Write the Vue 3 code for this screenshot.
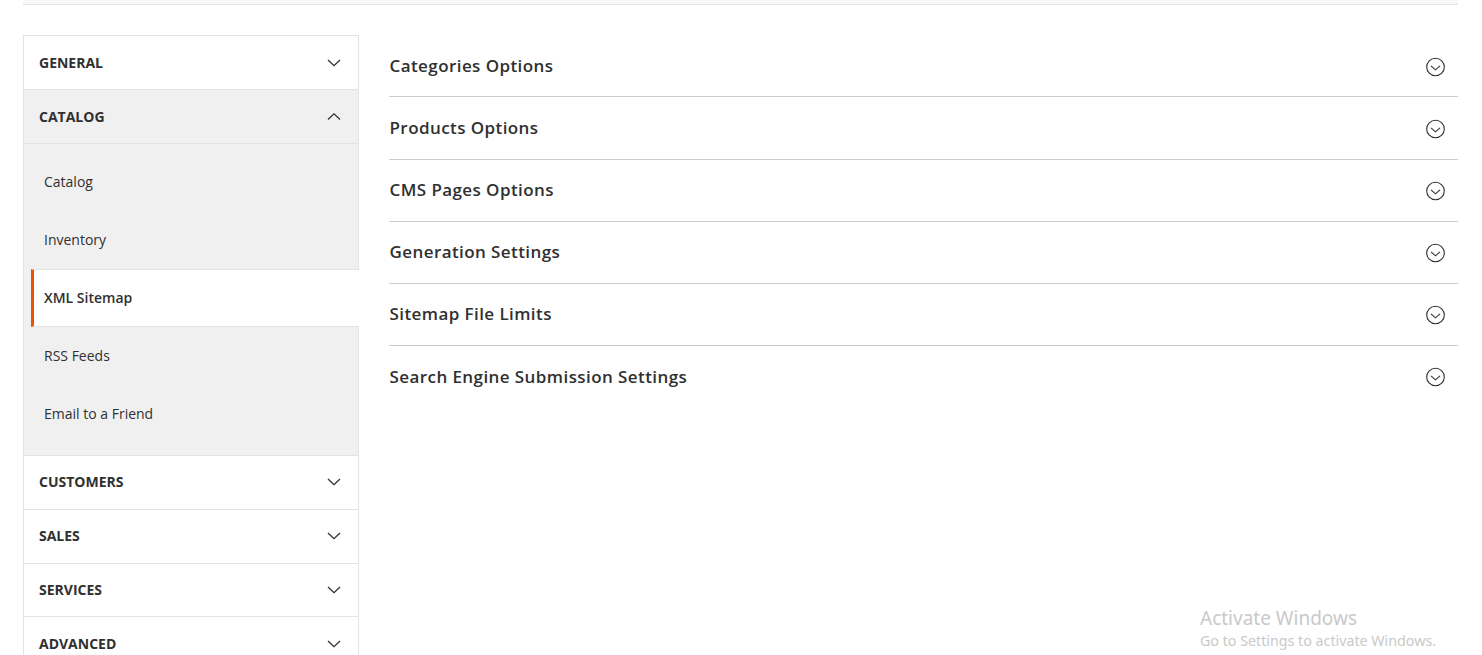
<script setup>
const before = [{ label: 'GENERAL', h: 54, nudge: false }]
const subs = ['Catalog', 'Inventory', 'XML Sitemap', 'RSS Feeds', 'Email to a Friend']
const after = [
  { label: 'CUSTOMERS', h: 54, nudge: true },
  { label: 'SALES', h: 54, nudge: true },
  { label: 'SERVICES', h: 53, nudge: true },
  { label: 'ADVANCED', h: 54, nudge: false }
]
const sections = [
  'Categories Options',
  'Products Options',
  'CMS Pages Options',
  'Generation Settings',
  'Sitemap File Limits',
  'Search Engine Submission Settings'
]
</script>

<template>
  <div class="page">
    <div class="topbar"></div>
    <div class="columns">
      <nav class="side">
        <div v-for="s in before" :key="s.label" class="head" :style="{ height: s.h + 'px' }">
          <span>{{ s.label }}</span>
          <svg class="chev" width="14" height="9" viewBox="0 0 14 9"><path d="M1 2 L7 7.7 L13 2" /></svg>
        </div>
        <div class="head open">
          <span>CATALOG</span>
          <svg class="chev" width="14" height="9" viewBox="0 0 14 9"><path d="M1 7.5 L7 1.8 L13 7.5" /></svg>
        </div>
        <div class="subs">
          <a v-for="s in subs" :key="s" class="sub" :class="{ active: s === 'XML Sitemap' }">{{ s }}</a>
        </div>
        <div v-for="s in after" :key="s.label" class="head" :class="{ nudge: s.nudge }" :style="{ height: s.h + 'px' }">
          <span>{{ s.label }}</span>
          <svg class="chev" width="14" height="9" viewBox="0 0 14 9"><path d="M1 2 L7 7.7 L13 2" /></svg>
        </div>
      </nav>
      <main class="main">
        <div v-for="(s, i) in sections" :key="s" class="section" :class="{ last: i === sections.length - 1 }">
          <span>{{ s }}</span>
          <svg class="circ" width="20" height="20" viewBox="0 0 20 20">
            <circle cx="10.5" cy="10" r="8.8" />
            <path d="M6 8.8 L10.5 12.8 L15 8.8" />
          </svg>
        </div>
      </main>
    </div>
    <div class="watermark">
      <div class="wm1">Activate Windows</div>
      <div class="wm2">Go to Settings to activate Windows.</div>
    </div>
  </div>
</template>

<style scoped>
.page {
  position: relative;
  width: 1482px;
  height: 655px;
  overflow: hidden;
  background: #fff;
  font-family: "Open Sans", sans-serif;
  color: #303030;
}
.topbar {
  height: 4px;
  margin: 0 24px 0 23px;
  background: #f8f8f8;
  border-bottom: 1px solid #e3e3e3;
}
.columns {
  display: flex;
  margin: 30px 24px 0 23px;
  align-items: flex-start;
}
.side {
  width: 336px;
  flex: none;
  border-top: 1px solid #e3e3e3;
}
.head {
  box-sizing: border-box;
  height: 54px;
  display: flex;
  align-items: center;
  justify-content: space-between;
  padding: 0 17px 0 15px;
  border: 1px solid #e3e3e3;
  border-top: none;
  font-size: 14px;
  font-weight: 700;
  background: #fff;
}
.head.open {
  background: #f0f0f0;
}
.head.nudge span,
.head.nudge .chev {
  margin-bottom: 2px;
}
.chev {
  display: block;
}
.chev path {
  fill: none;
  stroke: #303030;
  stroke-width: 1.3;
}
.subs {
  box-sizing: border-box;
  height: 312px;
  padding: 9px 0 0;
  background: #f0f0f0;
  border: 1px solid #e3e3e3;
  border-top: none;
}
.sub {
  display: flex;
  align-items: center;
  box-sizing: border-box;
  height: 58px;
  padding-left: 20px;
  padding-bottom: 2px;
  font-size: 14px;
  color: #303030;
}
.sub.active {
  margin: 0 -1px 0 7px;
  padding-left: 10px;
  background: #fff;
  border-left: 3px solid #eb5202;
  border-top: 1px solid #e3e3e3;
  border-bottom: 1px solid #e3e3e3;
  font-weight: 600;
}
.main {
  flex: 1;
  margin-left: 30px;
}
.section {
  box-sizing: border-box;
  height: 62.28px;
  display: flex;
  align-items: center;
  justify-content: space-between;
  border-bottom: 1px solid #cccccc;
  padding: 0 13px 0 0.5px;
  font-size: 17px;
  font-weight: 600;
  letter-spacing: 0.42px;
}
.section span {
  margin-bottom: 1.2px;
}
.section:nth-child(5) span {
  margin-bottom: 2px;
}
.section.last {
  border-bottom: none;
}
.circ {
  margin-top: 2px;
}
.section:nth-child(n + 5) .circ {
  margin-top: 0;
}
.circ circle,
.circ path {
  fill: none;
  stroke: #303030;
  stroke-width: 1.1;
}
.watermark {
  position: absolute;
  left: 1200px;
  top: 605px;
  font-family: "Noto Sans", "Open Sans", sans-serif;
  color: #c9c9c9;
}
.wm1 {
  font-size: 19px;
  line-height: 26px;
}
.wm2 {
  font-size: 14.25px;
  line-height: 20px;
}
</style>
